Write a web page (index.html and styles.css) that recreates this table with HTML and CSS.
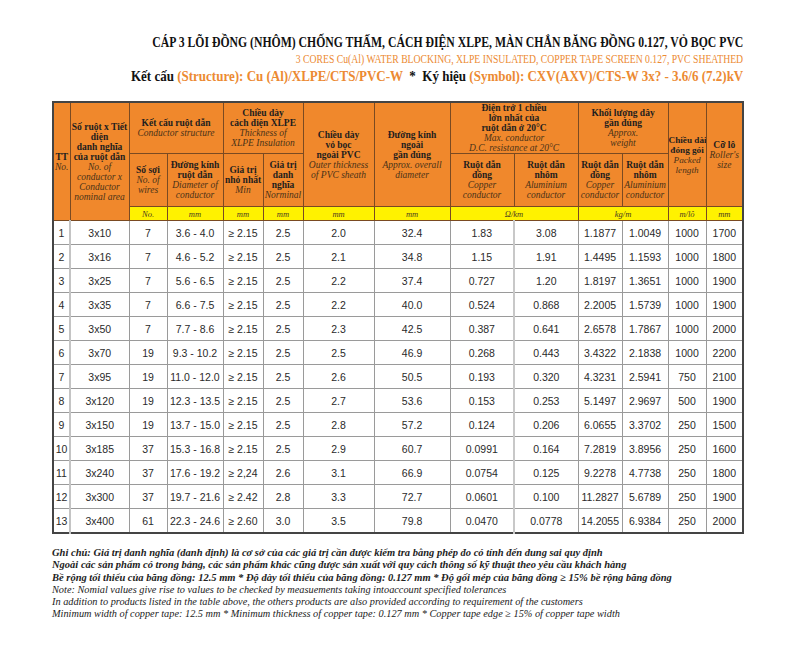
FILE: index.html
```html
<!DOCTYPE html>
<html lang="vi">
<head>
<meta charset="utf-8">
<title>CXV/CTS-W 3 lõi</title>
<link rel="stylesheet" href="styles.css">
</head>
<body>
<div class="page">
  <div class="title">
    <div class="t1">CÁP 3 LÕI ĐỒNG (NHÔM) CHỐNG THẤM, CÁCH ĐIỆN XLPE, MÀN CHẮN BĂNG ĐỒNG 0.127, VỎ BỌC PVC</div>
    <div class="t2">3 CORES Cu(Al) WATER BLOCKING, XLPE INSULATED, COPPER TAPE SCREEN 0.127, PVC SHEATHED</div>
    <div class="t3">Kết cấu <span class="hl">(Structure): Cu (Al)/XLPE/CTS/PVC-W</span> &nbsp;*&nbsp; Ký hiệu <span class="hl">(Symbol): CXV(AXV)/CTS-W 3x? - 3.6/6 (7.2)kV</span></div>
  </div>

  <table class="spec">
    <colgroup>
      <col class="c17"><col class="c59"><col class="c38"><col class="c56"><col class="c40"><col class="c40">
      <col class="c71"><col class="c76"><col class="c64"><col class="c64"><col class="c44"><col class="c46">
      <col class="c38"><col class="c37">
    </colgroup>
    <thead>
      <tr class="h1">
        <th rowspan="3"><b>TT</b><br><i>No.</i></th>
        <th rowspan="3"><b>Số ruột x Tiết<br>diện<br>danh nghĩa<br>của ruột dẫn</b><br><i>No. of<br>conductor x<br>Conductor<br>nominal area</i></th>
        <th colspan="2"><b>Kết cấu ruột dẫn</b><br><i>Conductor structure</i></th>
        <th colspan="2"><b>Chiều dày<br>cách điện XLPE</b><br><i>Thickness of<br>XLPE Insulation</i></th>
        <th rowspan="2"><b>Chiều dày<br>vỏ bọc<br>ngoài PVC</b><br><i>Outer thickness<br>of PVC sheath</i></th>
        <th rowspan="2"><b>Đường kính<br>ngoài<br>gần đúng</b><br><i>Approx. overall<br>diameter</i></th>
        <th colspan="2"><b>Điện trở 1 chiều<br>lớn nhất của<br>ruột dẫn ở 20°C</b><br><i>Max. conductor<br>D.C. resistance at 20°C</i></th>
        <th colspan="2"><b>Khối lượng dây<br>gần đúng</b><br><i>Approx.<br>weight</i></th>
        <th rowspan="2" class="tight"><b>Chiều dài<br>đóng gói</b><br><i>Packed<br>length</i></th>
        <th rowspan="2"><b>Cỡ lô</b><br><i>Roller's<br>size</i></th>
      </tr>
      <tr class="h2">
        <th><b>Số sợi</b><br><i>No. of<br>wires</i></th>
        <th><b>Đường kính<br>ruột dẫn</b><br><i>Diameter of<br>conductor</i></th>
        <th><b>Giá trị<br>nhỏ nhất</b><br><i>Min</i></th>
        <th><b>Giá trị<br>danh<br>nghĩa</b><br><i>Norminal</i></th>
        <th><b>Ruột dẫn<br>đồng</b><br><i>Copper<br>conductor</i></th>
        <th><b>Ruột dẫn<br>nhôm</b><br><i>Aluminium<br>conductor</i></th>
        <th><b>Ruột dẫn<br>đồng</b><br><i>Copper<br>conductor</i></th>
        <th><b>Ruột dẫn<br>nhôm</b><br><i>Aluminium<br>conductor</i></th>
      </tr>
      <tr class="units">
        <th>No.</th><th>mm</th><th>mm</th><th>mm</th><th>mm</th><th>mm</th>
        <th colspan="2">Ω/km</th><th colspan="2">kg/m</th><th>m/lô</th><th>mm</th>
      </tr>
    </thead>
    <tbody>
      <tr><td>1</td><td>3x10</td><td>7</td><td>3.6 - 4.0</td><td>≥ 2.15</td><td>2.5</td><td>2.0</td><td>32.4</td><td>1.83</td><td class="al">3.08</td><td>1.1877</td><td>1.0049</td><td>1000</td><td>1700</td></tr>
      <tr><td>2</td><td>3x16</td><td>7</td><td>4.6 - 5.2</td><td>≥ 2.15</td><td>2.5</td><td>2.1</td><td>34.8</td><td>1.15</td><td class="al">1.91</td><td>1.4495</td><td>1.1593</td><td>1000</td><td>1800</td></tr>
      <tr><td>3</td><td>3x25</td><td>7</td><td>5.6 - 6.5</td><td>≥ 2.15</td><td>2.5</td><td>2.2</td><td>37.4</td><td>0.727</td><td class="al">1.20</td><td>1.8197</td><td>1.3651</td><td>1000</td><td>1900</td></tr>
      <tr><td>4</td><td>3x35</td><td>7</td><td>6.6 - 7.5</td><td>≥ 2.15</td><td>2.5</td><td>2.2</td><td>40.0</td><td>0.524</td><td class="al">0.868</td><td>2.2005</td><td>1.5739</td><td>1000</td><td>1900</td></tr>
      <tr><td>5</td><td>3x50</td><td>7</td><td>7.7 - 8.6</td><td>≥ 2.15</td><td>2.5</td><td>2.3</td><td>42.5</td><td>0.387</td><td class="al">0.641</td><td>2.6578</td><td>1.7867</td><td>1000</td><td>2000</td></tr>
      <tr><td>6</td><td>3x70</td><td>19</td><td>9.3 - 10.2</td><td>≥ 2.15</td><td>2.5</td><td>2.5</td><td>46.9</td><td>0.268</td><td class="al">0.443</td><td>3.4322</td><td>2.1838</td><td>1000</td><td>2200</td></tr>
      <tr><td>7</td><td>3x95</td><td>19</td><td>11.0 - 12.0</td><td>≥ 2.15</td><td>2.5</td><td>2.6</td><td>50.5</td><td>0.193</td><td class="al">0.320</td><td>4.3231</td><td>2.5941</td><td>750</td><td>2100</td></tr>
      <tr><td>8</td><td>3x120</td><td>19</td><td>12.3 - 13.5</td><td>≥ 2.15</td><td>2.5</td><td>2.7</td><td>53.6</td><td>0.153</td><td class="al">0.253</td><td>5.1497</td><td>2.9697</td><td>500</td><td>1900</td></tr>
      <tr><td>9</td><td>3x150</td><td>19</td><td>13.7 - 15.0</td><td>≥ 2.15</td><td>2.5</td><td>2.8</td><td>57.2</td><td>0.124</td><td class="al">0.206</td><td>6.0655</td><td>3.3702</td><td>250</td><td>1500</td></tr>
      <tr><td>10</td><td>3x185</td><td>37</td><td>15.3 - 16.8</td><td>≥ 2.15</td><td>2.5</td><td>2.9</td><td>60.7</td><td>0.0991</td><td class="al">0.164</td><td>7.2819</td><td>3.8956</td><td>250</td><td>1600</td></tr>
      <tr><td>11</td><td>3x240</td><td>37</td><td>17.6 - 19.2</td><td>≥ 2,24</td><td>2.6</td><td>3.1</td><td>66.9</td><td>0.0754</td><td class="al">0.125</td><td>9.2278</td><td>4.7738</td><td>250</td><td>1800</td></tr>
      <tr><td>12</td><td>3x300</td><td>37</td><td>19.7 - 21.6</td><td>≥ 2.42</td><td>2.8</td><td>3.3</td><td>72.7</td><td>0.0601</td><td class="al">0.100</td><td>11.2827</td><td>5.6789</td><td>250</td><td>1900</td></tr>
      <tr><td>13</td><td>3x400</td><td>61</td><td>22.3 - 24.6</td><td>≥ 2.60</td><td>3.0</td><td>3.5</td><td>79.8</td><td>0.0470</td><td class="al">0.0778</td><td>14.2055</td><td>6.9384</td><td>250</td><td>2000</td></tr>
    </tbody>
  </table>

  <div class="notes">
    <p class="vn">Ghi chú: Giá trị danh nghĩa (danh định) là cơ sở của các giá trị cần được kiểm tra bằng phép đo có tính đến dung sai quy định</p>
    <p class="vn">Ngoài các sản phẩm có trong bảng, các sản phẩm khác cũng được sản xuất với quy cách thông số kỹ thuật theo yêu cầu khách hàng</p>
    <p class="vn">Bề rộng tối thiểu của băng đồng: 12.5 mm * Độ dày tối thiểu của băng đồng: 0.127 mm * Độ gối mép của băng đồng ≥ 15% bề rộng băng đồng</p>
    <p>Note: Nomial values give rise to values to be checked by measuements taking intoaccount specified tolerances</p>
    <p>In addition to products listed in the table above, the others products are also provided according to requirement of the customers</p>
    <p>Minimum width of copper tape: 12.5 mm * Minimum thickness of copper tape: 0.127 mm * Copper tape edge ≥ 15% of copper tape width</p>
  </div>
</div>
</body>
</html>
```

FILE: styles.css
```css
body {
  margin: 0;
  background: #ffffff;
}

.page {
  width: 691px;
  padding: 34px 0 0 52px;
}

.title {
  display: flex;
  flex-direction: column;
  align-items: flex-end;
  font-family: "Liberation Serif", serif;
  white-space: nowrap;
}

.title > div {
  width: max-content;
  transform-origin: right center;
}

.t1 {
  font-weight: bold;
  font-size: 14px;
  line-height: 17px;
  color: #111111;
  transform: scaleX(0.838);
}

.t2 {
  font-size: 12.5px;
  line-height: 17px;
  color: #ec8a32;
  transform: scaleX(0.775);
}

.t3 {
  font-weight: bold;
  font-size: 15px;
  line-height: 17px;
  color: #111111;
  transform: scaleX(0.867);
}

.t3 .hl {
  color: #ec8a32;
}

.spec {
  margin-top: 16px;
  width: 690px;
  table-layout: fixed;
  border-collapse: collapse;
  border: 2px solid #444444;
}

.c17 { width: 17px; }
.c59 { width: 59px; }
.c38 { width: 38px; }
.c56 { width: 56px; }
.c40 { width: 40px; }
.c71 { width: 71px; }
.c76 { width: 76px; }
.c64 { width: 64px; }
.c44 { width: 44px; }
.c46 { width: 46px; }
.c37 { width: 37px; }

.spec th {
  background: #f0882c;
  border: 1px solid #7a4a22;
  font-family: "Liberation Serif", serif;
  font-size: 9.5px;
  line-height: 10px;
  font-weight: normal;
  color: #1e1e1e;
  padding: 0 1px;
  vertical-align: middle;
  text-align: center;
  overflow: hidden;
}

.spec th.tight {
  padding: 0;
  font-size: 9.2px;
  white-space: nowrap;
}

.spec th b {
  font-weight: bold;
}

.spec th i {
  color: #4a3218;
}

.h1 { height: 51px; }
.h2 { height: 53px; }

.units {
  height: 14px;
}

.units th {
  background: #fff200;
  font-style: italic;
  font-size: 8.5px;
  line-height: 12px;
  color: #4a3a20;
}

.spec td {
  border: 1px solid #9a9a9a;
  height: 23px;
  padding: 0;
  font-family: "Liberation Sans", Arial, sans-serif;
  font-size: 10.5px;
  color: #2a2a2a;
  text-align: center;
  white-space: nowrap;
}

.spec td:first-child {
  border-right: 2px solid #c4c4c4;
}

.spec td.al {
  border-left: 2px solid #c8c8c8;
}

.notes {
  margin-top: 13px;
  font-family: "Liberation Serif", serif;
  font-style: italic;
  font-size: 10.5px;
  line-height: 12.3px;
  color: #222222;
  white-space: nowrap;
}

.notes p {
  margin: 0;
}

.notes .vn {
  font-weight: bold;
  font-size: 10.5px;
}

.notes p:not(.vn) {
  font-size: 10.3px;
}
```
